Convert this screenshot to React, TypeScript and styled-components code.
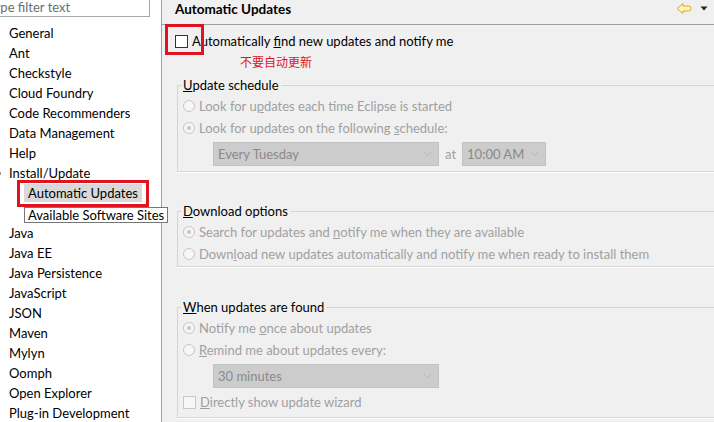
import React from "react";
import styled, { createGlobalStyle } from "styled-components";

const GlobalStyle = createGlobalStyle`
  html, body {
    margin: 0;
    padding: 0;
    overflow: hidden;
    background: #f0f0f0;
  }
  body {
    font-family: Lato, "Noto Sans", "Noto Sans CJK SC", sans-serif;
    font-size: 13px;
    color: #000;
  }
`;

const treeItems: { label: string; level: number; kind?: "selected" | "tip" }[] = [
  { label: "General", level: 0 },
  { label: "Ant", level: 0 },
  { label: "Checkstyle", level: 0 },
  { label: "Cloud Foundry", level: 0 },
  { label: "Code Recommenders", level: 0 },
  { label: "Data Management", level: 0 },
  { label: "Help", level: 0 },
  { label: "Install/Update", level: 0 },
  { label: "Automatic Updates", level: 1, kind: "selected" },
  { label: "Available Software Sites", level: 1, kind: "tip" },
  { label: "Java", level: 0 },
  { label: "Java EE", level: 0 },
  { label: "Java Persistence", level: 0 },
  { label: "JavaScript", level: 0 },
  { label: "JSON", level: 0 },
  { label: "Maven", level: 0 },
  { label: "Mylyn", level: 0 },
  { label: "Oomph", level: 0 },
  { label: "Open Explorer", level: 0 },
  { label: "Plug-in Development", level: 0 },
];

const Window = styled.div`
  display: flex;
  height: 422px;
  width: 714px;
  overflow: hidden;
`;

const Sidebar = styled.div`
  position: relative;
  z-index: 1;
  width: 162px;
  flex-shrink: 0;
  box-sizing: border-box;
  background: #fff;
  border-right: 1px solid #a0a0a0;
`;

const FilterBox = styled.div`
  box-sizing: border-box;
  width: 168px;
  height: 20px;
  margin: -3px 0 0 -18px;
  padding: 0 0 0 6px;
  border: 1px solid #a8a8a8;
  color: #6d6d6d;
  line-height: 18px;
  white-space: nowrap;
`;

const Tree = styled.ul`
  list-style: none;
  margin: 6px 0 0;
  padding: 0;
`;

const TreeRow = styled.li<{ $level: number }>`
  position: relative;
  height: 20px;
  line-height: 20px;
  padding-left: ${(p) => (p.$level ? 24 : 9)}px;
  white-space: nowrap;
`;

const Expander = styled.span`
  position: absolute;
  left: -3px;
  top: 9px;
  width: 4px;
  height: 3px;
  background: #9a9a9a;
`;

const SelectedLabel = styled.span`
  position: relative;
  display: inline-block;
  height: 18px;
  line-height: 18px;
  margin-top: 1px;
  padding: 0 4px;
  background: #d9d9d9;

  &::after {
    content: "";
    position: absolute;
    top: -4px;
    left: -7px;
    right: -7px;
    bottom: -5px;
    border: 3px solid #e0141e;
  }
`;

const TipLabel = styled.span`
  position: relative;
  z-index: 1;
  display: inline-block;
  box-sizing: border-box;
  height: 16px;
  line-height: 14px;
  margin-top: 4px;
  padding: 0 3px;
  background: #fff;
  border: 1px solid #767676;
`;

const Pane = styled.div`
  flex: 1;
  min-width: 0;
  display: flex;
  flex-direction: column;
  background: #f0f0f0;
  overflow: hidden;
`;

const PaneHeader = styled.div`
  display: flex;
  align-items: flex-start;
  justify-content: space-between;
  height: 24px;
  padding: 0 6px 0 13px;
  border-bottom: 1px solid #a0a0a0;
`;

const PaneTitle = styled.div`
  font-weight: 700;
  font-size: 13.5px;
  line-height: 18px;
`;

const HeaderTools = styled.div`
  display: flex;
  align-items: center;
  gap: 8px;
  height: 16px;
`;

const Content = styled.div`
  padding: 5px 0 0 13px;
`;

const OptionRow = styled.label<{ $disabled?: boolean }>`
  display: flex;
  align-items: center;
  height: 22px;
  gap: 4px;
  color: ${(p) => (p.$disabled ? "#a0a0a0" : "#000")};
  white-space: nowrap;
`;

const CheckBox = styled.span<{ $disabled?: boolean }>`
  box-sizing: border-box;
  width: 13px;
  height: 13px;
  flex-shrink: 0;
  background: ${(p) => (p.$disabled ? "#f6f6f6" : "#fff")};
  border: 1px solid ${(p) => (p.$disabled ? "#c8c8c8" : "#333")};
`;

const Radio = styled.span<{ $checked?: boolean }>`
  position: relative;
  box-sizing: border-box;
  width: 12px;
  height: 12px;
  flex-shrink: 0;
  border-radius: 50%;
  background: #f6f6f6;
  border: 1px solid #c6c6c6;

  &::after {
    content: "";
    display: ${(p) => (p.$checked ? "block" : "none")};
    position: absolute;
    left: 3px;
    top: 3px;
    width: 4px;
    height: 4px;
    border-radius: 50%;
    background: #c4c4c4;
  }
`;

const MainCheck = styled(OptionRow)`
  position: relative;

  &::before {
    content: "";
    position: absolute;
    left: -10px;
    top: -6px;
    width: 33px;
    height: 25px;
    border: 3px solid #e0141e;
  }
`;

const Note = styled.div`
  height: 20px;
  line-height: 20px;
  padding-left: 65px;
  color: #e0141e;
  font-family: "Noto Sans CJK SC", sans-serif;
  font-size: 12px;
`;

const Group = styled.fieldset<{ $gap: number; $bottom: number }>`
  margin: ${(p) => p.$gap}px -60px 0 2px;
  padding: 2px 0 ${(p) => p.$bottom}px 5px;
  border: 1px solid #d5d5d5;
  box-shadow: 0 1px 0 #fff;
`;

const Legend = styled.legend`
  margin-left: -2px;
  padding: 0 2px;
  height: 16px;
  line-height: 16px;
`;

const ComboRow = styled.div<{ $top: number; $bottom?: number }>`
  display: flex;
  align-items: center;
  gap: 6px;
  margin: ${(p) => p.$top}px 0 ${(p) => p.$bottom ?? 0}px;
  padding-left: 30px;
  color: #a0a0a0;
`;

const Combo = styled.div<{ $width: number }>`
  box-sizing: border-box;
  display: flex;
  align-items: center;
  justify-content: space-between;
  width: ${(p) => p.$width}px;
  height: 24px;
  padding: 0 6px 0 4px;
  background: #cccccc;
  border: 1px solid #c2c2c2;
  color: #8a8a8a;
`;

const Chevron = () => (
  <svg width="9" height="6" viewBox="0 0 9 6">
    <path d="M1 1 L4.5 4.5 L8 1" fill="none" stroke="#b8b8b8" strokeWidth="1" />
  </svg>
);

const BackIcon = () => (
  <svg width="16" height="13" viewBox="0 0 16 13">
    <path
      d="M1 6.5 L7 1.5 V4 H12.5 Q15 4 15 6.5 Q15 9 12.5 9 H7 V11.5 Z"
      fill="#fff4b8"
      stroke="#e0a820"
      strokeWidth="1"
      strokeLinejoin="round"
    />
  </svg>
);

const MenuTriangle = () => (
  <svg width="8" height="5" viewBox="0 0 8 5">
    <path d="M0.5 0.5 H7.5 L4 4.5 Z" fill="#222" />
  </svg>
);

const App = () => {
  return (
    <>
      <GlobalStyle />
      <Window>
        <Sidebar>
          <FilterBox>type filter text</FilterBox>
          <Tree>
            {treeItems.map((item) => (
              <TreeRow key={item.label} $level={item.level}>
                {item.label === "Install/Update" && <Expander />}
                {item.kind === "selected" ? (
                  <SelectedLabel>{item.label}</SelectedLabel>
                ) : item.kind === "tip" ? (
                  <TipLabel>{item.label}</TipLabel>
                ) : (
                  item.label
                )}
              </TreeRow>
            ))}
          </Tree>
        </Sidebar>

        <Pane>
          <PaneHeader>
            <PaneTitle>Automatic Updates</PaneTitle>
            <HeaderTools>
              <BackIcon />
              <MenuTriangle />
            </HeaderTools>
          </PaneHeader>

          <Content>
            <MainCheck>
              <CheckBox />
              <span>
                Automatically <u>f</u>ind new updates and notify me
              </span>
            </MainCheck>
            <Note>不要自动更新</Note>

            <Group $gap={5} $bottom={5}>
              <Legend>
                <u>U</u>pdate schedule
              </Legend>
              <OptionRow $disabled>
                <Radio />
                <span>
                  Look for u<u>p</u>dates each time Eclipse is started
                </span>
              </OptionRow>
              <OptionRow $disabled>
                <Radio $checked />
                <span>
                  Look for updates on the following <u>s</u>chedule:
                </span>
              </OptionRow>
              <ComboRow $top={3}>
                <Combo $width={226}>
                  <span>Every Tuesday</span>
                  <Chevron />
                </Combo>
                <span>at</span>
                <Combo $width={84}>
                  <span>10:00 AM</span>
                  <Chevron />
                </Combo>
              </ComboRow>
            </Group>

            <Group $gap={31} $bottom={1}>
              <Legend>
                <u>D</u>ownload options
              </Legend>
              <OptionRow $disabled>
                <Radio $checked />
                <span>
                  Search for updates and <u>n</u>otify me when they are available
                </span>
              </OptionRow>
              <OptionRow $disabled>
                <Radio />
                <span>
                  Down<u>l</u>oad new updates automatically and notify me when ready to install them
                </span>
              </OptionRow>
            </Group>

            <Group $gap={32} $bottom={4}>
              <Legend>
                <u>W</u>hen updates are found
              </Legend>
              <OptionRow $disabled>
                <Radio $checked />
                <span>
                  Notify me <u>o</u>nce about updates
                </span>
              </OptionRow>
              <OptionRow $disabled>
                <Radio />
                <span>
                  <u>R</u>emind me about updates every:
                </span>
              </OptionRow>
              <ComboRow $top={3} $bottom={3}>
                <Combo $width={226}>
                  <span>30 minutes</span>
                  <Chevron />
                </Combo>
              </ComboRow>
              <OptionRow $disabled>
                <CheckBox $disabled />
                <span>
                  <u>D</u>irectly show update wizard
                </span>
              </OptionRow>
            </Group>
          </Content>
        </Pane>
      </Window>
    </>
  );
};

export default App;
